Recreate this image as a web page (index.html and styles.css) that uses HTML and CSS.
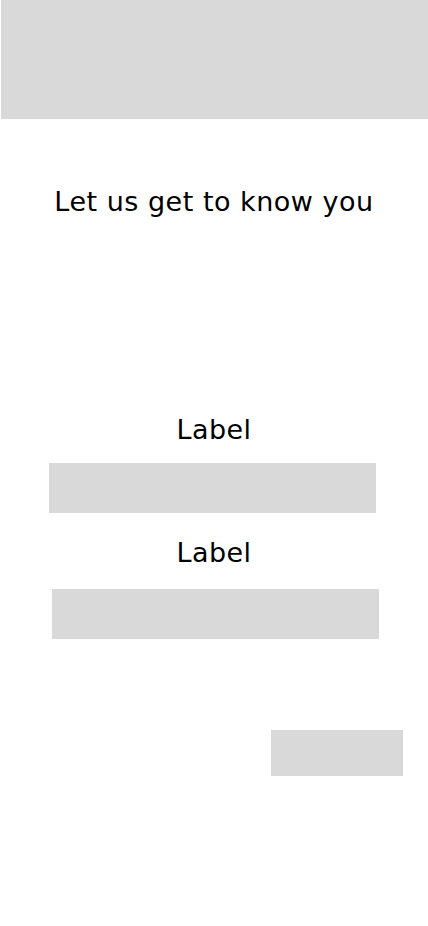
FILE: index.html
```html
<!DOCTYPE html>
<html lang="en">
<head>
<meta charset="utf-8">
<title>Let us get to know you</title>
<link rel="stylesheet" href="styles.css">
</head>
<body>
<div class="page">
  <header class="hero"></header>
  <h1 class="title">Let us get to know you</h1>
  <form class="form">
    <label class="label">Label</label>
    <div class="field field-one"></div>
    <label class="label label-two">Label</label>
    <div class="field field-two"></div>
    <div class="actions">
      <div class="button"></div>
    </div>
  </form>
</div>
</body>
</html>
```
FILE: styles.css
```css
* { box-sizing: border-box; }
html, body { margin: 0; padding: 0; background: #fff; }
body { font-family: "DejaVu Sans", "Liberation Sans", sans-serif; color: #000; }
.page { width: 428px; height: 926px; display: flex; flex-direction: column; }
.hero { height: 119px; margin-left: 1px; background: #d9d9d9; }
.title {
  margin: 65px 0 0 0;
  font-size: 27px;
  font-weight: 400;
  line-height: 36px;
  letter-spacing: 0.5px;
  text-align: center;
}
.form { display: flex; flex-direction: column; margin-top: 192px; }
.label { display: block; text-align: center; font-size: 27px; line-height: 36px; letter-spacing: 0.4px; }
.field { height: 50px; background: #d9d9d9; width: 327px; }
.field-one { margin: 15px 0 0 49px; }
.label-two { margin-top: 22px; }
.field-two { margin: 18px 0 0 52px; }
.actions { display: flex; justify-content: flex-end; padding-right: 25px; margin-top: 91px; }
.button { width: 132px; height: 46px; background: #d9d9d9; }
```
